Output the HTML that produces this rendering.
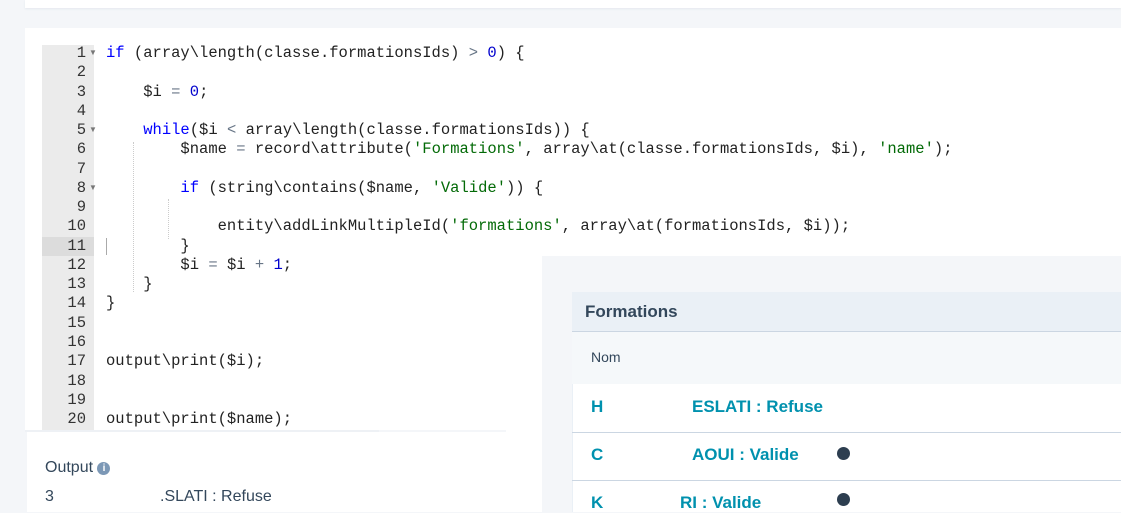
<!DOCTYPE html>
<html><head><style>
*{margin:0;padding:0;box-sizing:border-box}
body{width:1121px;height:512px;overflow:hidden;background:#f4f6f9;position:relative;font-family:"Liberation Sans",sans-serif}
.a{position:absolute}
.code{font-family:"Liberation Mono",monospace;font-size:15.5px;color:#222;white-space:pre}
.k{color:#0000ff}.n{color:#0000cd}.s{color:#036a07}.o{color:#687687}
.link{color:#0091ae;font-weight:bold;font-size:17px}
.dot{position:absolute;width:13px;height:13px;border-radius:50%;background:#2d3e50}
.fa{position:absolute;left:89px;font-size:8px;color:#777}
</style></head><body>
<div class="a" style="left:25px;top:0;width:1096px;height:8px;background:#fff;box-shadow:0 1px 2px #e4e8ee"></div>
<div class="a" style="left:25px;top:28px;width:1096px;height:228px;background:#fff"></div>
<div class="a" style="left:25px;top:250px;width:481px;height:180px;background:#fff"></div>
<div class="a" style="left:506px;top:250px;width:36px;height:262px;background:#fff"></div>
<div class="a" style="left:42px;top:45px;width:52px;height:385px;background:#ebebeb"></div>
<div class="a" style="left:42px;top:237px;width:52px;height:19px;background:#dcdcdc"></div>
<div class="a" style="left:106px;top:238px;width:1px;height:17px;background:#aaa"></div>
<div class="a" style="left:27px;top:432px;width:352px;height:80px;background:#fff"></div>
<div class="a" style="left:379px;top:432px;width:163px;height:80px;background:#fff"></div>
<div class="a" style="left:25px;top:430px;width:354px;height:2px;background:#eef1f5"></div>
<div class="a" style="left:133px;top:142px;width:1px;height:150px;border-left:1px dotted #ccc"></div>
<div class="a" style="left:168px;top:199px;width:1px;height:40px;border-left:1px dotted #ccc"></div>
<div class="a code" style="left:106px;top:44px;line-height:19.27px"><span class="k">if</span> (array\length(classe.formationsIds) <span class="o">&gt;</span> <span class="n">0</span>) {

    $i <span class="o">=</span> <span class="n">0</span>;

    <span class="k">while</span>($i <span class="o">&lt;</span> array\length(classe.formationsIds)) {
        $name <span class="o">=</span> record\attribute(<span class="s">'Formations'</span>, array\at(classe.formationsIds, $i), <span class="s">'name'</span>);

        <span class="k">if</span> (string\contains($name, <span class="s">'Valide'</span>)) {

            entity\addLinkMultipleId(<span class="s">'formations'</span>, array\at(formationsIds, $i));
        }
        $i <span class="o">=</span> $i <span class="o">+</span> <span class="n">1</span>;
    }
}


output\print($i);


output\print($name);</div>
<div class="a" style="left:42px;top:44px;width:52px;line-height:19.27px;font-family:'Liberation Mono',monospace;font-size:15.5px;color:#333;white-space:pre;text-align:right;padding-right:8px">1
2
3
4
5
6
7
8
9
10
11
12
13
14
15
16
17
18
19
20</div>
<div class="fa" style="top:48px">▼</div>
<div class="fa" style="top:125px">▼</div>
<div class="fa" style="top:183px">▼</div>
<div class="a" style="left:45px;top:459px;font-size:16px;color:#33475b">Output <span style="display:inline-block;width:13px;height:13px;border-radius:50%;background:#7c98b6;color:#fff;font-size:10px;text-align:center;line-height:13px;font-weight:bold;vertical-align:1px">i</span></div>
<div class="a" style="left:45px;top:488px;font-size:16px;color:#33475b">3</div>
<div class="a" style="left:160px;top:488px;font-size:16px;color:#33475b">.SLATI : Refuse</div>
<div class="a" style="left:572px;top:292px;width:549px;height:40px;background:#eaf0f6;border-bottom:1px solid #cbd6e2"></div>
<div class="a" style="left:585px;top:302px;font-size:17px;font-weight:bold;color:#33475b">Formations</div>
<div class="a" style="left:572px;top:332px;width:549px;height:52px;background:#f5f8fa"></div>
<div class="a" style="left:591px;top:349px;font-size:14px;color:#33475b">Nom</div>
<div class="a" style="left:572px;top:384px;width:549px;height:128px;background:#fff;border-left:1px solid #eaf0f6"></div>
<div class="a" style="left:572px;top:432px;width:549px;height:1px;background:#cbd6e2"></div>
<div class="a" style="left:572px;top:480px;width:549px;height:1px;background:#cbd6e2"></div>
<div class="a link" style="left:591px;top:397px">H</div><div class="a link" style="left:692px;top:397px">ESLATI : Refuse</div>
<div class="a link" style="left:591px;top:445px">C</div><div class="a link" style="left:692px;top:445px">AOUI : Valide</div>
<div class="a link" style="left:591px;top:493px">K</div><div class="a link" style="left:680px;top:493px">RI : Valide</div>
<div class="dot" style="left:837px;top:447px"></div>
<div class="dot" style="left:837px;top:493px"></div>
</body></html>
